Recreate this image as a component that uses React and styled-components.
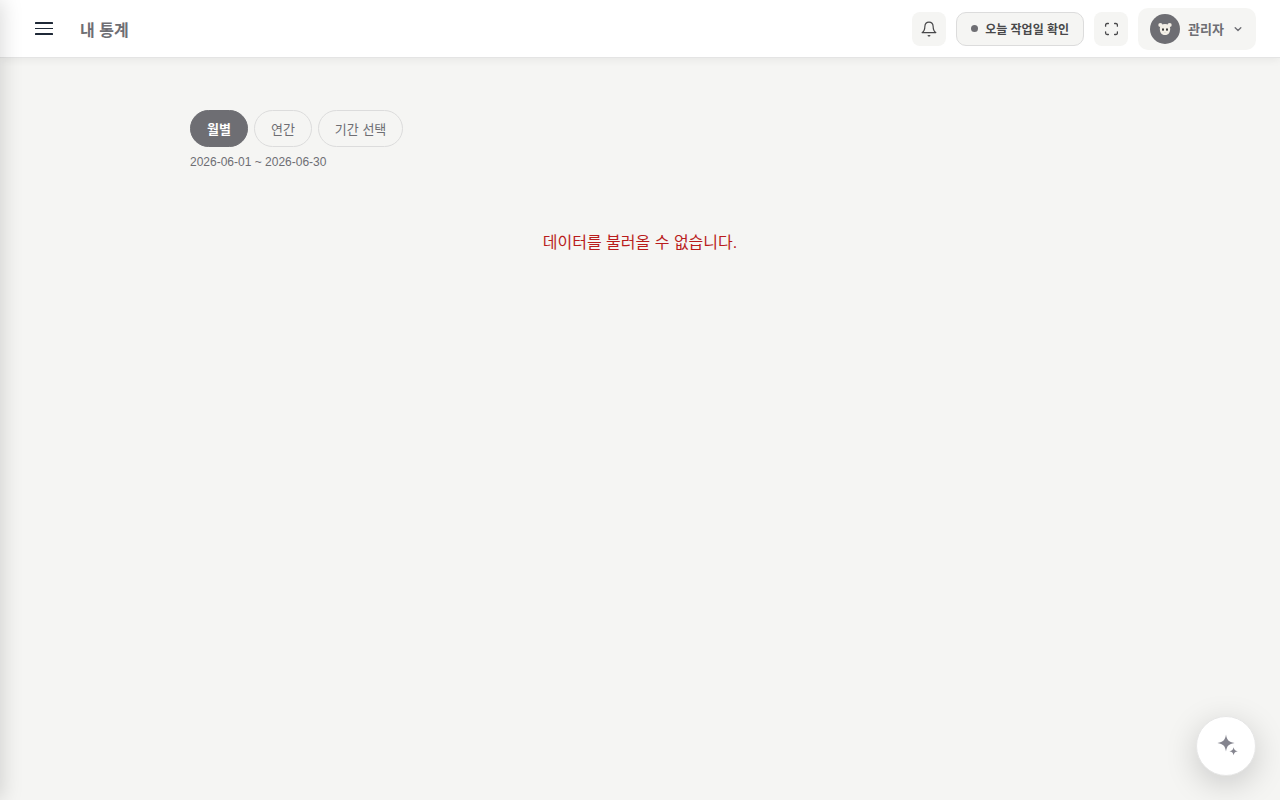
import React from "react";
import styled, { createGlobalStyle } from "styled-components";

const GlobalStyle = createGlobalStyle`
  *, *::before, *::after { box-sizing: border-box; }
  html, body { margin: 0; }
  body {
    background: #f5f5f3;
    color: #6e6e73;
    font-family: "Liberation Sans", "Noto Sans CJK KR", sans-serif;
    font-size: 16px;
  }
  button { font-family: inherit; cursor: pointer; }
`;

const Page = styled.div`
  min-height: 100vh;
`;

const Drawer = styled.aside`
  position: fixed;
  top: 0;
  bottom: 0;
  left: -260px;
  width: 260px;
  z-index: 20;
  background: #fff;
  box-shadow: 2px 0 20px rgba(0, 0, 0, 0.15);
`;

const Header = styled.header`
  position: sticky;
  top: 0;
  z-index: 10;
  display: flex;
  align-items: center;
  justify-content: space-between;
  height: 58px;
  padding: 0 24px;
  background: #fff;
  border-bottom: 1px solid #e4e4e4;
  box-shadow: 0 2px 8px rgba(0, 0, 0, 0.06);
`;

const HeaderGroup = styled.div`
  display: flex;
  align-items: center;
  gap: ${(p) => p.$gap}px;
`;

const MenuButton = styled.button`
  display: flex;
  align-items: center;
  justify-content: center;
  width: 40px;
  height: 40px;
  padding: 0;
  border: 0;
  background: none;
  color: #1f2937;
`;

const Title = styled.h1`
  margin: 0;
  font-size: 16px;
  line-height: normal;
  font-weight: 700;
`;

const SquareButton = styled.button`
  display: flex;
  align-items: center;
  justify-content: center;
  width: 34px;
  height: 34px;
  padding: 0;
  border: 0;
  border-radius: 8px;
  background: #f5f5f3;
  color: #48484a;
`;

const WorkdayButton = styled.button`
  display: flex;
  align-items: center;
  gap: 7px;
  height: 34px;
  padding: 0 14px;
  border: 1px solid #dcdcdc;
  border-radius: 10px;
  background: #f5f5f3;
  color: #48484a;
  font-size: 12px;
  font-weight: 700;
`;

const Dot = styled.span`
  width: 7px;
  height: 7px;
  border-radius: 50%;
  background: #6e6e73;
`;

const ProfileButton = styled.button`
  display: flex;
  align-items: center;
  gap: 8px;
  height: 42px;
  padding: 0 12px;
  border: 0;
  border-radius: 10px;
  background: #f5f5f3;
  color: #6e6e73;
  font-size: 13px;
  font-weight: 700;
`;

const Avatar = styled.span`
  display: flex;
  align-items: center;
  justify-content: center;
  width: 30px;
  height: 30px;
  border-radius: 50%;
  background: #6e6e73;
`;

const Main = styled.main`
  max-width: 948px;
  margin: 0 auto;
  padding: 52px 24px 24px;
`;

const Periods = styled.div`
  display: flex;
  gap: 6px;
`;

const PeriodButton = styled.button`
  height: 37px;
  padding: 0 16px;
  border: 1px solid ${(p) => (p.$active ? "#6e6e73" : "#dcdcdc")};
  border-radius: 20px;
  background: ${(p) => (p.$active ? "#6e6e73" : "transparent")};
  color: ${(p) => (p.$active ? "#fff" : "#6e6e73")};
  font-size: 13px;
  font-weight: ${(p) => (p.$active ? 700 : 400)};
`;

const Range = styled.p`
  margin: 8px 0 0;
  font-size: 12px;
  line-height: 14px;
`;

const ErrorText = styled.p`
  margin: 0;
  padding: 60px 0;
  color: #b91c1c;
  text-align: center;
  font-size: 16px;
  line-height: normal;
`;

const AssistantButton = styled.button`
  position: fixed;
  right: 24px;
  bottom: 24px;
  display: flex;
  align-items: center;
  justify-content: center;
  width: 60px;
  height: 60px;
  padding: 0;
  border: 1px solid #e6e6e6;
  border-radius: 50%;
  background: #fff;
  color: #85858f;
  box-shadow: 0 8px 32px rgba(0, 0, 0, 0.18);
`;

const MenuIcon = () => (
  <svg width="18" height="14" viewBox="0 0 18 14" fill="currentColor" aria-hidden="true">
    <rect y="0" width="18" height="2" rx="0.5" />
    <rect y="6" width="18" height="1" />
    <rect y="11" width="18" height="2" rx="0.5" />
  </svg>
);

const BellIcon = () => (
  <svg width="16" height="16" viewBox="0 0 16 16" fill="none" stroke="currentColor" strokeWidth="1.2" strokeLinecap="round" strokeLinejoin="round" aria-hidden="true">
    <path d="M8 1.2C5.3 1.2 4 3 3.9 5.3C3.8 8.6 3.4 10.4 1.2 11.6H14.8C12.6 10.4 12.2 8.6 12.1 5.3C12 3 10.7 1.2 8 1.2Z" />
    <path d="M7.2 14.6Q8 15 8.8 14.6" />
  </svg>
);

const ExpandIcon = () => (
  <svg width="14" height="14" viewBox="0 0 14 14" fill="none" stroke="currentColor" strokeWidth="1.3" strokeLinecap="round" strokeLinejoin="round" aria-hidden="true">
    <path d="M1.6 4.2V3Q1.6 1.5 3.1 1.5H4.4M10.6 1.5H11.9Q13.4 1.5 13.4 3V4.2M13.4 9.8V11Q13.4 12.5 11.9 12.5H10.6M4.4 12.5H3.1Q1.6 12.5 1.6 11V9.8" />
  </svg>
);

const BearIcon = () => (
  <svg width="16" height="16" viewBox="0 0 16 16" aria-hidden="true">
    <g fill="#f3efe6">
      <circle cx="3.4" cy="4" r="2.1" />
      <circle cx="12.6" cy="4" r="2.1" />
      <path d="M8 3C11.2 3 13.2 4.9 13.2 7.6C13.2 9.6 12.9 10.8 12.1 11.9C11.2 13.2 9.8 14 8 14C6.2 14 4.8 13.2 3.9 11.9C3.1 10.8 2.8 9.6 2.8 7.6C2.8 4.9 4.8 3 8 3Z" />
    </g>
    <g fill="#2b2b2b">
      <ellipse cx="6" cy="8.6" rx="0.9" ry="1.3" />
      <ellipse cx="10" cy="8.6" rx="0.9" ry="1.3" />
      <ellipse cx="8" cy="11.3" rx="0.7" ry="0.4" opacity="0.25" />
    </g>
  </svg>
);

const ChevronIcon = () => (
  <svg width="12" height="12" viewBox="0 0 12 12" fill="none" stroke="currentColor" strokeWidth="1.4" strokeLinecap="round" strokeLinejoin="round" aria-hidden="true">
    <path d="M3.2 4.8L6 7.4L8.8 4.8" />
  </svg>
);

const SparkleIcon = () => (
  <svg width="24" height="24" viewBox="0 0 24 24" fill="currentColor" aria-hidden="true">
    <path d="M12 0.6C12.9 6.1 14.6 8 20.6 9C14.6 10 12.9 11.9 12 17.4C11.1 11.9 9.4 10 3.4 9C9.4 8 11.1 6.1 12 0.6Z" />
    <path d="M19.6 13.2C20.1 15.7 20.9 16.6 23.8 17.2C20.9 17.8 20.1 18.7 19.6 21.2C19.1 18.7 18.3 17.8 15.4 17.2C18.3 16.6 19.1 15.7 19.6 13.2Z" />
  </svg>
);

const periods = ["월별", "연간", "기간 선택"];

export default function App() {
  const [active, setActive] = React.useState(periods[0]);
  return (
    <Page>
      <GlobalStyle />
      <Drawer aria-hidden="true" />
      <Header>
        <HeaderGroup $gap={16}>
          <MenuButton type="button" aria-label="메뉴"><MenuIcon /></MenuButton>
          <Title>내 통계</Title>
        </HeaderGroup>
        <HeaderGroup $gap={10}>
          <SquareButton type="button" aria-label="알림"><BellIcon /></SquareButton>
          <WorkdayButton type="button"><Dot />오늘 작업일 확인</WorkdayButton>
          <SquareButton type="button" aria-label="전체 화면"><ExpandIcon /></SquareButton>
          <ProfileButton type="button">
            <Avatar><BearIcon /></Avatar>
            관리자
            <ChevronIcon />
          </ProfileButton>
        </HeaderGroup>
      </Header>
      <Main>
        <Periods>
          {periods.map((p) => (
            <PeriodButton key={p} type="button" $active={p === active} aria-pressed={p === active} onClick={() => setActive(p)}>
              {p}
            </PeriodButton>
          ))}
        </Periods>
        <Range>2026-06-01 ~ 2026-06-30</Range>
        <ErrorText role="alert">데이터를 불러올 수 없습니다.</ErrorText>
      </Main>
      <AssistantButton type="button" aria-label="도우미"><SparkleIcon /></AssistantButton>
    </Page>
  );
}
